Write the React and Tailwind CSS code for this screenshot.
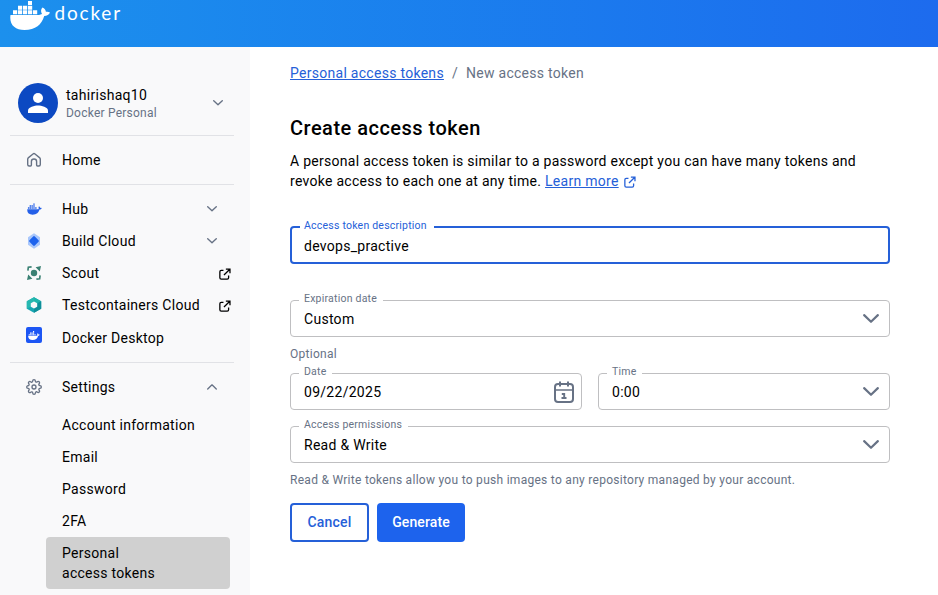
import React from "react";
import { FiSettings } from "react-icons/fi";

function Chevron({ className = "w-3", up = false, thick = 1.5 }) {
  return (
    <svg viewBox="0 0 14 8" className={className} fill="none" stroke="currentColor" strokeWidth={thick} strokeLinecap="round" strokeLinejoin="round">
      <path d={up ? "M1 7 7 1.2 13 7" : "M1 1 7 6.8 13 1"} />
    </svg>
  );
}

function External({ className }) {
  return (
    <svg viewBox="0 0 14 14" className={className} fill="none" stroke="currentColor" strokeWidth="1.5">
      <path d="M5.2 2.8H2.6A1.6 1.6 0 0 0 1 4.4v7A1.6 1.6 0 0 0 2.6 13h7a1.6 1.6 0 0 0 1.6-1.6V8.8M8 1.2h4.8V6M12.6 1.4 5.8 8.2" />
    </svg>
  );
}

function Whale({ className }) {
  return (
    <svg viewBox="0 0 40 29" className={className} fill="currentColor">
      <path d="M18 0h4v4h-4zM8 4.800h4.200v3.900H8zM13 4.800h4.200v3.900H13zM18 4.800h4.200v3.900H18zM3 9.300h4.200v3.900H3zM8 9.300h4.200v3.900H8zM13 9.300h4.200v3.900H13zM18 9.300h4.200v3.900H18zM23 9.300h4.200v3.900H23z" />
      <path d="M.5 13.900h28.500c1 0 2.200-.3 3-.8-1.300-2-1.300-4.800.5-6.600 2 1 3.200 2.500 3.400 4.300 1.500-.3 3-.1 4.100.8-1 2.200-3 3.300-5.800 3.400C31.800 23.500 25.500 29 14.500 29 5 29-1 24 .5 13.900z" />
    </svg>
  );
}

function SmallWhale({ className }) {
  return (
    <svg viewBox="0 0 16 12" className={className} fill="currentColor">
      <path d="M6.700 0h1.500v1.500H6.700zM2.800 2.100h1.500v1.500H2.800zM4.750 2.100h1.500v1.500h-1.500zM6.700 2.100h1.500v1.500H6.700zM1 4.200h1.400v1.500H1zM2.800 4.200h1.500v1.500H2.800zM4.750 4.200h1.500v1.500h-1.500zM6.700 4.200h1.500v1.500H6.700zM8.700 4.200h1.500v1.500H8.700z" />
      <path d="M.3 6.200h11c.5 0 1-.1 1.300-.3-.5-1-.4-2 .2-2.800.8.400 1.200 1 1.300 1.700.6-.1 1.200 0 1.600.3-.4.900-1.200 1.300-2.300 1.400C12.500 9.800 10.200 12 6 12 2 12-.1 10 .3 6.200z" />
    </svg>
  );
}

function HomeIcon() {
  return (
    <svg viewBox="0 0 16 16" className="size-4 text-[#677285]" fill="none" stroke="currentColor" strokeWidth="1.4" strokeLinejoin="round">
      <path d="M1.700 7.200c0-.7.300-1.200.8-1.600L7 2c.6-.5 1.400-.5 2 0l4.500 3.600c.5.400.8.900.8 1.600v5.300c0 .9-.6 1.500-1.500 1.500h-1.300c-.5 0-.9-.4-.9-.9V9.600a2.600 2.600 0 0 0-5.200 0v3.500c0 .5-.4.900-.9.900H3.200c-.9 0-1.500-.6-1.500-1.500z" />
    </svg>
  );
}

function BuildIcon() {
  return (
    <svg viewBox="0 0 16 16" className="size-4">
      <path d="M8 .3 14 4.200v7.600L8 15.700 2 11.800V4.200z" fill="#a9c7fb" />
      <rect x="4.200" y="4.200" width="7.600" height="7.600" rx="1.200" transform="rotate(45 8 8)" fill="#1d63ed" />
    </svg>
  );
}

function ScoutIcon() {
  return (
    <svg viewBox="0 0 16 16" className="size-4" fill="#3a8173">
      <circle cx="8" cy="8" r="3.200" />
      <path d="M9.600 2.200 15 1l-1.200 5.400zM6.400 13.800 1 15l1.200-5.400z" />
      <path d="M1.900 5.600 2.300 2.300 5.600 1.900M14.100 10.400l-.4 3.300-3.300.4" fill="none" stroke="#3a8173" strokeWidth="1.600" />
    </svg>
  );
}

function TestcontainersIcon() {
  return (
    <svg viewBox="0 0 16 16" className="size-4">
      <path d="M8 .2 15.200 4.200v7.600L8 15.800.8 11.800V4.200z" fill="#17a6b2" />
      <path d="M8 .2 15.200 4.200 8 8z" fill="#1fb5ab" />
      <path d="M15.200 4.200v7.600L8 15.800V8z" fill="#0f8f99" />
      <path d="M8 .2V8L.8 11.800V4.200z" fill="#27b8b0" />
      <path d="M8 4.500l3.200 1.800v3.500L8 11.500 4.800 9.800V6.300z" fill="#f9f9fa" />
    </svg>
  );
}

function DesktopIcon() {
  return (
    <span className="flex size-4 items-center justify-center rounded-[2px] bg-[#1d56f4] text-white">
      <SmallWhale className="h-[9px] w-3" />
    </span>
  );
}

function CalendarIcon() {
  return (
    <svg viewBox="0 0 20 22" className="h-[22px] w-5" fill="none" stroke="#677285" strokeWidth="2">
      <rect x="1" y="3" width="18" height="18" rx="3" />
      <path d="M1 9h18" strokeWidth="1.500" />
      <path d="M6 .5V5.500M14 .5V5.500" />
      <path d="M7.800 13h2.400v4M7.500 17h5" strokeWidth="1.900" />
    </svg>
  );
}

function Item({ icon, label, end, className = "h-8" }) {
  return (
    <div className={`flex items-center pl-4 ${className}`}>
      <span className="flex w-4 shrink-0 justify-center">{icon}</span>
      <span className="ml-5 flex-1 whitespace-nowrap">{label}</span>
      {end}
    </div>
  );
}

const chevronEnd = (up) => (
  <span className="mr-[17px] text-[#677285]">
    <Chevron className="w-[10px]" up={up} thick={1.9} />
  </span>
);
const externalEnd = <External className="relative top-px mr-[3px] size-3" />;

function Field({ label, value, end, focused, labelWidth, className = "" }) {
  return (
    <fieldset className={`min-w-0 rounded-[4px] px-2 ${focused ? "h-[45px] border-2 border-[#2560d8]" : "h-11 border border-[#bfbfc1]"} ${className}`}>
      <legend className={`whitespace-nowrap text-[10.5px] tracking-[0.22px] ${labelWidth} ${focused ? "h-4 pl-1 leading-[13px] text-[#2560d8]" : "h-[15px] pl-[5px] leading-[12px] text-[#677285]"}`}>{label}</legend>
      <div className={`flex h-[22px] items-center justify-between ${focused ? "pl-1" : "pl-[5px]"}`}>
        <span>{value}</span>
        {end}
      </div>
    </fieldset>
  );
}

const selectEnd = <span className="mr-[2px] text-[#677285]"><Chevron className="w-4" thick={1.9} /></span>;

export default function App() {
  return (
    <div className="flex h-[595px] w-[938px] flex-col overflow-hidden bg-white font-['Roboto',sans-serif] text-[14px] leading-5 tracking-[0.28px] text-black">
      <header className="flex h-[47px] shrink-0 bg-linear-to-r from-[#1c90ed] to-[#1d6bee] pl-[10px] text-white">
        <Whale className="mt-px h-[29px] w-10" />
        <span className="ml-[4.5px] mt-[3px] font-['Lato',sans-serif] text-[19px] leading-5 tracking-[1.8px]">docker</span>
      </header>
      <div className="flex min-h-0 flex-1">
        <aside className="w-[250px] shrink-0 bg-[#f9f9fa] pl-[10px] pr-4 pt-9">
          <div className="flex h-10 items-center pl-2">
            <span className="flex size-10 items-center justify-center rounded-full bg-[#0c49c2]">
              <svg viewBox="0 0 20 20" className="size-5" fill="white">
                <circle cx="10" cy="5" r="5" />
                <path d="M0 20v-2.500C0 14.200 6.700 12.500 10 12.500s10 1.700 10 5V20z" />
              </svg>
            </span>
            <div className="ml-2 flex-1 pt-0.5">
              <div className="leading-[18px]">tahirishaq10</div>
              <div className="text-[12px] leading-[18px] tracking-[0.23px] text-[#677285]">Docker Personal</div>
            </div>
            <span className="mr-[11px] text-[#677285]"><Chevron className="w-[10px]" thick={1.9} /></span>
          </div>
          <div className="mt-3 border-y border-[#e1e2e6]">
            <Item icon={<HomeIcon />} label="Home" className="h-12" />
          </div>
          <nav className="mt-2 border-b border-[#e1e2e6] pb-2">
            <Item icon={<SmallWhale className="h-3 w-[15px] text-[#2560e8]" />} label="Hub" end={chevronEnd(false)} />
            <Item icon={<BuildIcon />} label="Build Cloud" end={chevronEnd(false)} />
            <Item icon={<ScoutIcon />} label="Scout" end={externalEnd} />
            <Item icon={<TestcontainersIcon />} label="Testcontainers Cloud" end={externalEnd} />
            <Item icon={<span className="-mt-[5px]"><DesktopIcon /></span>} label="Docker Desktop" className="h-[33px]" />
          </nav>
          <div className="pt-2">
            <Item icon={<FiSettings className="size-4 text-[#677285]" />} label="Settings" end={chevronEnd(true)} />
            <ul className="ml-9 mt-1.5">
              {["Account information", "Email", "Password", "2FA"].map((t) => (
                <li key={t} className="h-8 pl-4 leading-8">{t}</li>
              ))}
              <li className="mr-1 h-[52px] rounded-[4px] bg-[#d0d0d0] py-1.5 pl-4">
                Personal<br />access tokens
              </li>
            </ul>
          </div>
        </aside>
        <main className="w-[640px] pl-10 pt-4">
          <div className="flex text-[#677285]">
            <a className="text-[#2560d8] underline underline-offset-1">Personal access tokens</a>
            <span className="mx-2">/</span>
            <span>New access token</span>
          </div>
          <h1 className="mt-[31px] text-[20px] font-medium leading-7 tracking-[0.49px]">Create access token</h1>
          <p className="mt-[9px] whitespace-nowrap">
            A personal access token is similar to a password except you can have many tokens and<br />
            revoke access to each one at any time. <a className="text-[#2560d8] underline underline-offset-1">Learn more</a>
            <External className="ml-[5px] inline size-3 align-[-2px] text-[#2560d8]" />
          </p>
          <Field focused label="Access token description" value="devops_practive" labelWidth="w-[134px]" className="mt-7" />
          <Field label="Expiration date" value="Custom" labelWidth="w-[84px]" className="mt-[29px]" end={selectEnd} />
          <div className="mt-[7px] text-[12px] leading-5 text-[#677285]">Optional</div>
          <div className="mt-[2px] grid grid-cols-2 gap-4">
            <Field label="Date" value="09/22/2025" labelWidth="w-[33px]" end={<span className="-mr-px"><CalendarIcon /></span>} />
            <Field label="Time" value="0:00" labelWidth="w-[35px]" end={selectEnd} />
          </div>
          <Field label="Access permissions" value="Read & Write" labelWidth="w-[109px]" className="mt-[9px]" end={selectEnd} />
          <div className="mt-[7px] whitespace-nowrap text-[12px] leading-5 text-[#677285]">
            Read &amp; Write tokens allow you to push images to any repository managed by your account.
          </div>
          <div className="mt-[13px] flex gap-2 font-medium">
            <button className="h-[39px] w-[79px] rounded-[4px] border-2 border-[#2560d8] pb-[2px] tracking-[0.2px] text-[#2560d8]">Cancel</button>
            <button className="h-[39px] w-[88px] rounded-[4px] bg-[#1d63ed] pb-[2px] tracking-[0.1px] text-white">Generate</button>
          </div>
        </main>
      </div>
    </div>
  );
}
